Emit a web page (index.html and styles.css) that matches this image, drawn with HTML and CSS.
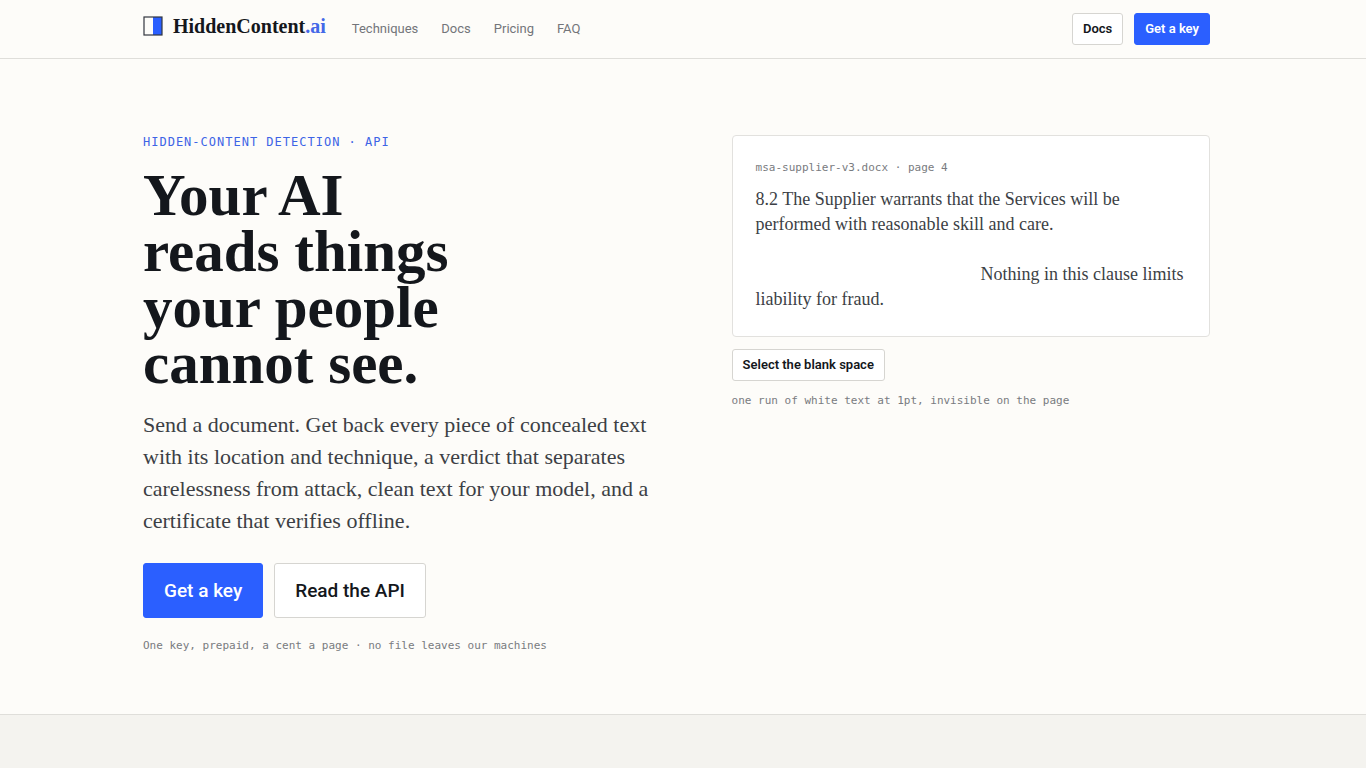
FILE: index.html
```html
<!DOCTYPE html>
<html lang="en">

<head>
    <meta charset="UTF-8">
    <meta name="viewport" content="width=device-width, initial-scale=1.0">
    <title>HiddenContent.ai</title>
    <link rel="stylesheet" href="styles.css">
</head>

<body>
    <header class="site-header">
        <a href="#" class="logo">
            <svg class="logo-mark" width="20" height="20" viewBox="0 0 20 20" aria-hidden="true">
                <rect x="10" y="1" width="9" height="18" fill="#2b5fff" />
                <rect x="1" y="1" width="18" height="18" fill="none" stroke="#33363f" stroke-width="1.2" />
            </svg>
            <span class="logo-name">HiddenContent<span class="logo-tld">.ai</span></span>
        </a>
        <nav class="site-nav">
            <a href="#techniques">Techniques</a>
            <a href="#docs">Docs</a>
            <a href="#pricing">Pricing</a>
            <a href="#faq">FAQ</a>
        </nav>
        <div class="header-btns">
            <a href="#docs" class="btn">Docs</a>
            <a href="#key" class="btn btn-primary">Get a key</a>
        </div>
    </header>
    <main>
        <section class="hero">
            <div class="hero-text">
                <p class="eyebrow">HIDDEN-CONTENT DETECTION · API</p>
                <h1>Your AI<br>reads things<br>your people<br>cannot see.</h1>
                <p class="lead">Send a document. Get back every piece of concealed text with its location and technique, a verdict that separates carelessness from attack, clean text for your model, and a certificate that verifies offline.</p>
                <div class="hero-btns">
                    <a href="#key" class="btn btn-large btn-primary">Get a key</a>
                    <a href="#docs" class="btn btn-large">Read the API</a>
                </div>
                <p class="note">One key, prepaid, a cent a page · no file leaves our machines</p>
            </div>
            <div class="demo">
                <div class="page-card">
                    <p class="note">msa-supplier-v3.docx · page 4</p>
                    <p class="clause">8.2 The Supplier warrants that the Services will be<br>performed with reasonable skill and care.<br><br><span class="blank-run"></span>Nothing in this clause limits liability for fraud.</p>
                </div>
                <button type="button" class="btn">Select the blank space</button>
                <p class="note">one run of white text at 1pt, invisible on the page</p>
            </div>
        </section>
        <section class="band"></section>
    </main>
</body>

</html>
```
FILE: styles.css
```css
* {
    box-sizing: border-box;
}

body {
    margin: 0;
    min-height: 100vh;
    display: flex;
    flex-direction: column;
    background: #fdfcf9;
    color: #14171c;
    font-family: "Liberation Serif", serif;
}

h1,
p {
    margin: 0;
}

a {
    color: inherit;
    text-decoration: none;
}

main {
    flex: 1;
    display: flex;
    flex-direction: column;
}

.site-header,
.hero {
    padding-left: 143px;
    padding-right: 156px;
    border-bottom: 1px solid #dfdeda;
}

.site-header {
    display: flex;
    align-items: center;
    height: 59px;
}

.logo {
    display: flex;
    align-items: center;
    gap: 10px;
    padding-bottom: 6px;
}

.logo-name {
    font-size: 20px;
    line-height: 24px;
    font-weight: 700;
}

.logo-tld {
    color: #4468e8;
}

.site-nav {
    display: flex;
    gap: 23px;
    margin-left: 26px;
    font-family: Roboto, sans-serif;
    font-size: 13px;
    line-height: 20px;
    color: #73757a;
}

.header-btns,
.hero-btns {
    display: flex;
    gap: 11px;
}

.header-btns {
    margin-left: auto;
}

.btn {
    display: inline-block;
    height: 32px;
    padding: 0 10px;
    border: 1px solid #d6d5d1;
    border-radius: 3px;
    background: #fff;
    color: #14171c;
    font-family: Roboto, sans-serif;
    font-size: 13px;
    line-height: 30px;
    font-weight: 600;
    cursor: pointer;
}

.btn-primary {
    background: #2b5fff;
    border-color: #2b5fff;
    color: #fff;
}

.btn-large {
    height: 55px;
    padding: 0 20px;
    font-size: 19px;
    line-height: 54px;
    font-weight: 500;
}

.hero {
    display: grid;
    grid-template-columns: 10fr 9fr;
    gap: 57px;
    padding-top: 76px;
    padding-bottom: 60px;
}

.eyebrow,
.note {
    font-family: "DejaVu Sans Mono", monospace;
    font-size: 11px;
    line-height: 16px;
    color: #797b80;
}

.eyebrow {
    font-size: 12px;
    line-height: 14px;
    letter-spacing: 1px;
    color: #3d64e6;
    margin-bottom: 18px;
}

h1 {
    font-size: 59px;
    line-height: 56px;
    font-weight: 700;
}

.lead {
    margin-top: 18px;
    font-size: 22px;
    line-height: 32px;
    color: #3c3f45;
}

.hero-btns {
    margin-top: 26px;
    margin-bottom: 20px;
}

.page-card {
    margin-bottom: 12px;
    padding: 24px 23px;
    background: #fff;
    border: 1px solid #e2e1de;
    border-radius: 4px;
}

.clause {
    margin-top: 11px;
    font-size: 18px;
    line-height: 25px;
    color: #3c3f45;
}

/* room taken by the white run before the last sentence */
.blank-run {
    display: inline-block;
    width: 225px;
}

.demo .btn {
    margin-bottom: 12px;
}

.band {
    flex: 1;
    background: #f4f3ef;
}
```
